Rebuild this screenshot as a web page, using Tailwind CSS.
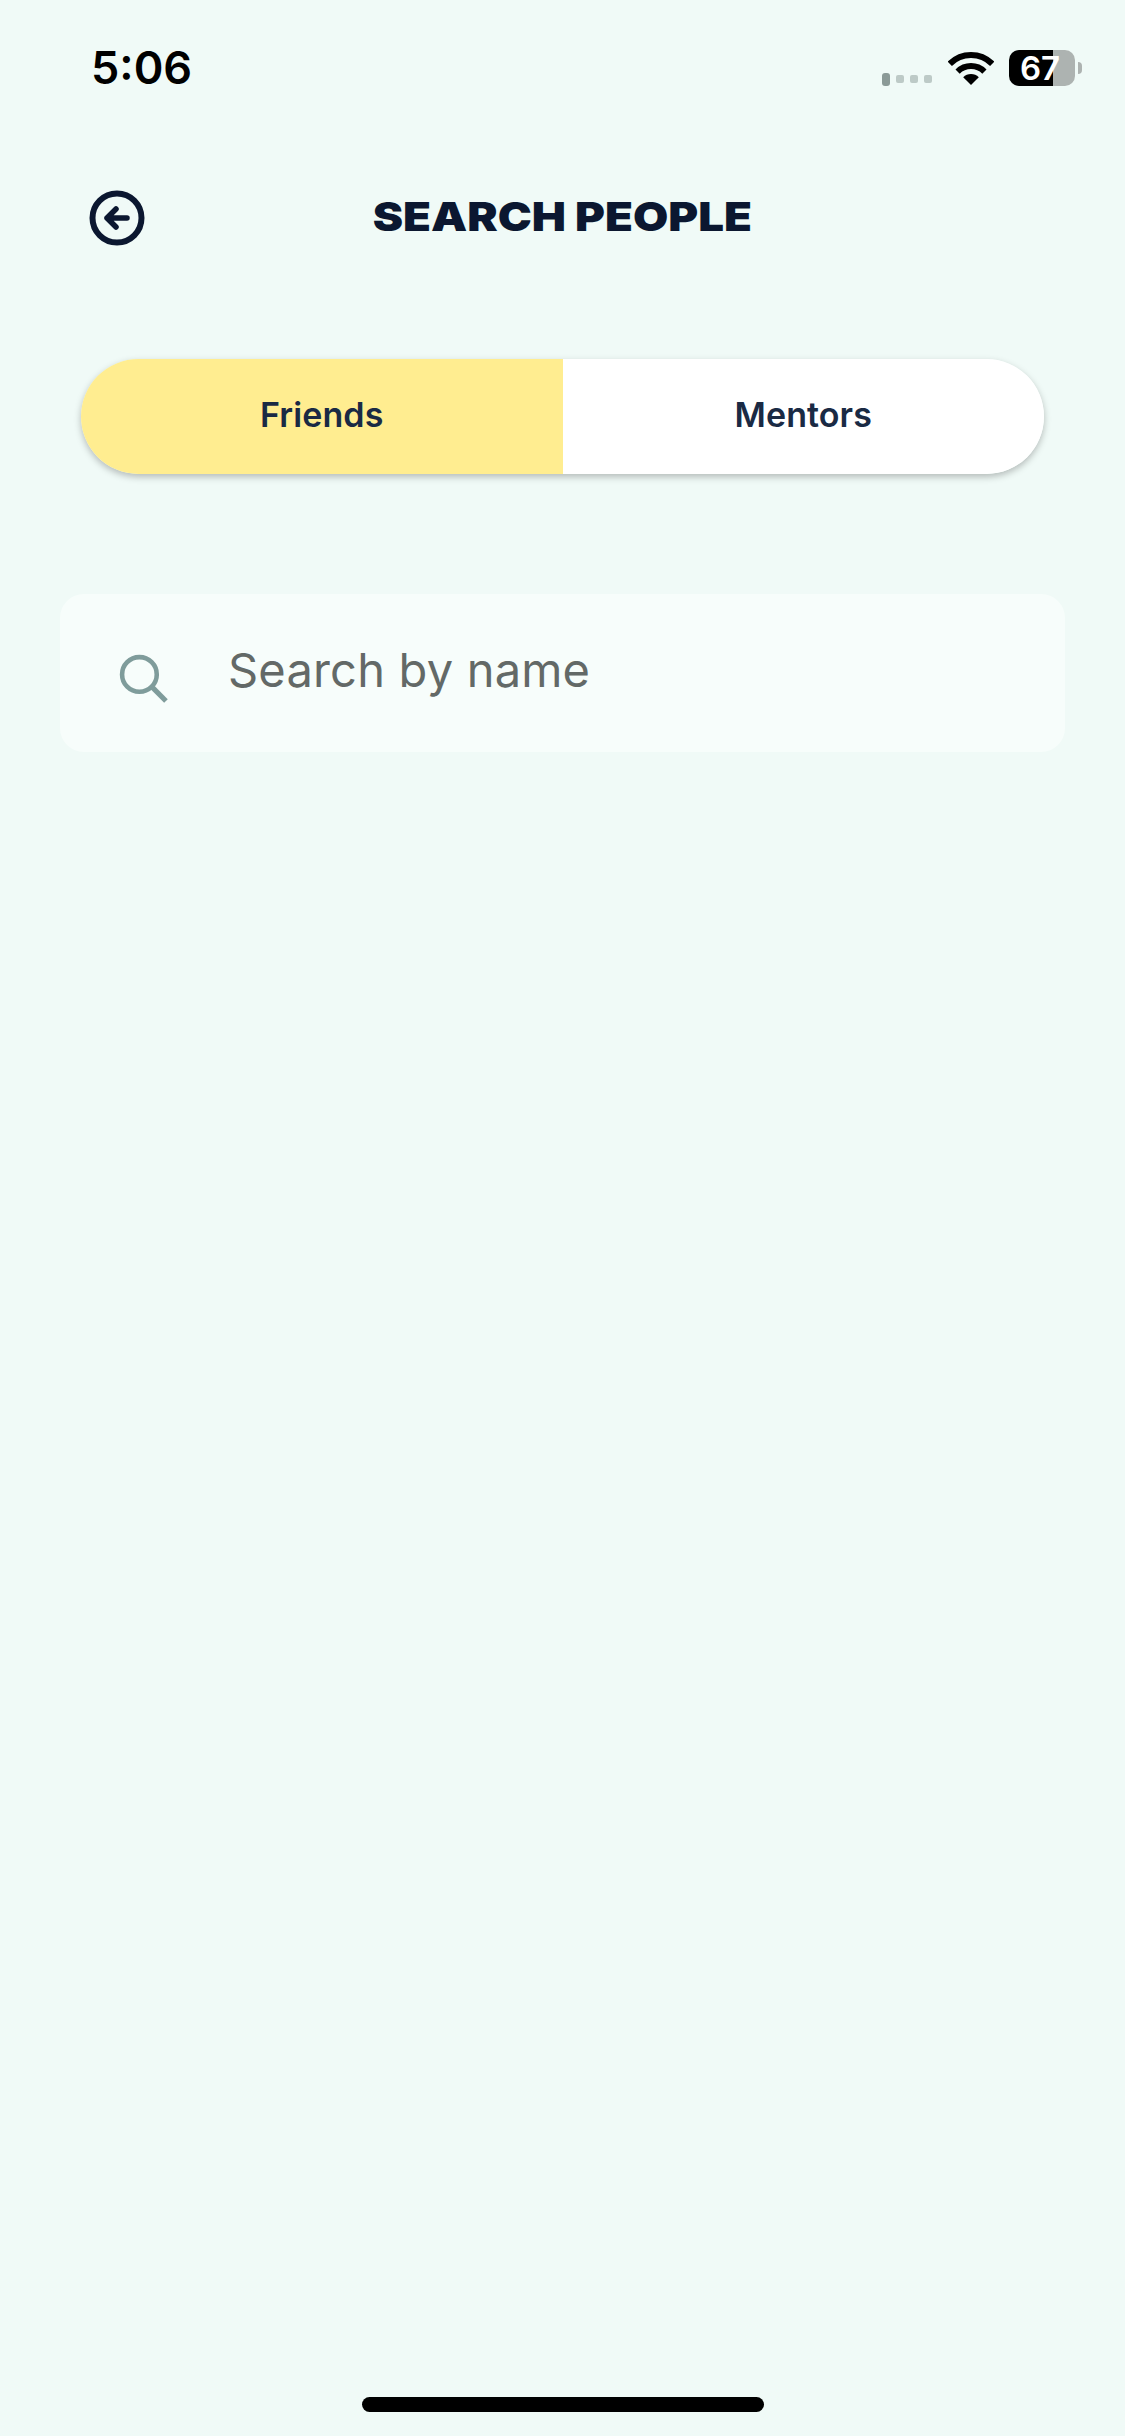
<!doctype html>
<html lang="en">
<head>
<meta charset="utf-8">
<title>Search People</title>
<script src="https://cdn.jsdelivr.net/npm/@tailwindcss/browser@4"></script>
</head>
<body class="bg-[#f0faf7]">
<div class="flex h-[2436px] w-[1125px] flex-col overflow-hidden bg-[#f0faf7] font-['Inter',sans-serif]">

  <!-- Status bar -->
  <header class="flex h-[103px] items-end justify-between pl-[91px] pr-[43px] pb-[7px]">
    <span class="text-[45px] leading-[56px] font-semibold text-black">5:06</span>
    <div class="flex items-center pb-[10px]">
      <div class="mt-[22px] flex items-center gap-[6px]">
        <span class="h-[13px] w-[8px] rounded-[3px] bg-[#8b9a97]"></span>
        <span class="h-[8px] w-[8px] rounded-[2px] bg-[#bdcac7]"></span>
        <span class="h-[8px] w-[8px] rounded-[2px] bg-[#bdcac7]"></span>
        <span class="h-[8px] w-[8px] rounded-[2px] bg-[#bdcac7]"></span>
      </div>
      <svg class="ml-[16px]" width="46" height="33" viewBox="0 0 46 33" fill="none">
        <path d="M1.8 11.8A30 30 0 0 1 44.2 11.8" stroke="#000" stroke-width="6"/>
        <path d="M9.6 19.6A19 19 0 0 1 36.4 19.6" stroke="#000" stroke-width="6"/>
        <path d="M23 33L15.2 25.2A11 11 0 0 1 30.8 25.2Z" fill="#000"/>
      </svg>
      <div class="relative ml-[15px] flex h-[36px] w-[66px]">
        <span class="w-[44px] rounded-l-[10px] bg-black"></span>
        <span class="flex-1 rounded-r-[10px] bg-[#adb3b1]"></span>
        <span class="absolute top-0 left-[11px] text-[33px] leading-[36px] font-semibold text-white">67</span>
      </div>
      <span class="ml-[3px] h-[12px] w-[4px] rounded-r-full bg-[#adb3b1]"></span>
    </div>
  </header>

  <!-- Title row -->
  <div class="mt-[87px] grid grid-cols-[1fr_auto_1fr] items-center pl-[89px]">
    <button class="justify-self-start" aria-label="Back">
      <svg class="block" width="56" height="56" viewBox="0 0 56 56" fill="none" stroke="#0b1730" stroke-linecap="round" stroke-linejoin="round">
        <circle cx="28" cy="28" r="24.5" stroke-width="6"/>
        <path d="M18 28H38M27 19L18 28L27 37" stroke-width="5.5"/>
      </svg>
    </button>
    <h1 class="-ml-[89px] -translate-y-[1px] scale-x-[1.14] text-[40px] leading-[48px] font-black text-[#0b1730]">SEARCH PEOPLE</h1>
    <span></span>
  </div>

  <!-- Friends / Mentors switch -->
  <div class="mx-[81px] mt-[113px] flex h-[115px] overflow-hidden rounded-full shadow-[0_3px_7px_rgba(0,0,0,0.25)]">
    <button class="flex flex-1 items-center justify-center bg-[#ffed90] pb-[5px] text-[34px] font-semibold tracking-[0.1px] text-[#1a2a44]">Friends</button>
    <button class="flex flex-1 items-center justify-center bg-white pb-[5px] text-[34px] font-semibold tracking-[0.1px] text-[#1a2a44]">Mentors</button>
  </div>

  <!-- Search field -->
  <div class="mx-[60px] mt-[120px] flex h-[158px] items-center rounded-[24px] bg-[#f7fdfb] pl-[58px]">
    <svg class="mt-[10px] shrink-0" width="51" height="51" viewBox="0 0 50 50" fill="none" stroke="#7f9c9b" stroke-width="4.5">
      <circle cx="21" cy="21" r="17"/>
      <path d="M33 33L47 47" stroke-width="5"/>
    </svg>
    <span class="ml-[59px] -mt-[6px] text-[47px] leading-[56px] tracking-[0.2px] text-[#636967]">Search by name</span>
  </div>

  <!-- Home indicator -->
  <div class="mt-auto flex justify-center pb-[24px]">
    <span class="h-[15px] w-[402px] rounded-full bg-black"></span>
  </div>
</div>
</body>
</html>
